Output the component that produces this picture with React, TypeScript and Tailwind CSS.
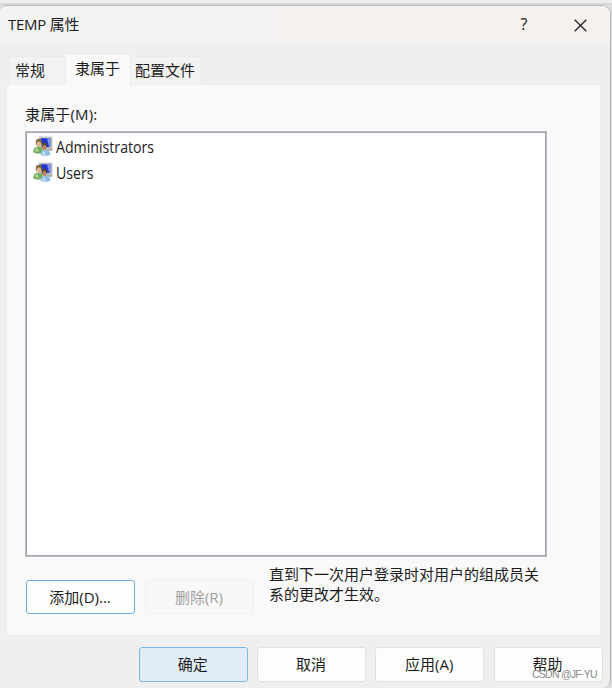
import React, { useState } from "react";

type DialogButtonProps = {
  label: string;
  className: string;
  disabled?: boolean;
};

const DialogButton: React.FC<DialogButtonProps> = ({ label, className, disabled }) => (
  <button
    disabled={disabled}
    className={`flex w-[109px] shrink-0 items-center justify-center rounded-[3px] border pr-px ${className}`}
  >
    {label}
  </button>
);

const GroupIcon = () => (
  <svg width="20" height="20" viewBox="0 0 20 20" className="shrink-0">
    <path d="M5.5.5h14v14.2H7z" fill="#c4c5c2" />
    <path d="M7.5 2.2h10v8.8H9z" fill="#2136cc" />
    <path d="M14 2.2h3.5v8.8h-1.3z" fill="#8297ec" />
    <path d="M14 12.2h4.8v2.5H14z" fill="#adafac" />
    <path d="M.3 16.3c0-4 2-5.6 5-5.6s4.5 1.6 4.5 5.6c-2 1.6-7.5 1.6-9.5 0z" fill="#6fad62" />
    <path d="M1.8 15.5c0-2 1-3.4 2.4-4l2 4z" fill="#aad493" />
    <ellipse cx="5.8" cy="6.4" rx="3.1" ry="3.6" fill="#86683f" />
    <ellipse cx="5.8" cy="8.2" rx="2.3" ry="2.7" fill="#dbb78a" />
    <path d="M7.5 18.8c0-3.4 1.8-4.6 5-4.6s5 1.2 5 4.6c-2.4 1.4-7.4 1.4-10 0z" fill="#8dbce2" />
    <path d="M9 18.4c0-2 .8-3 2.4-3.5l1.6 4z" fill="#c3e0f3" />
    <ellipse cx="11.4" cy="9.8" rx="2.5" ry="3.4" fill="#624838" />
    <ellipse cx="11.5" cy="11.7" rx="1.9" ry="2.6" fill="#bd8a66" />
  </svg>
);

const tabs = [
  { label: "常规", className: "h-[29px] w-[58px] pl-[6px] pt-[3px]" },
  { label: "隶属于", className: "h-[30px] w-[64px] pl-[8px] pt-[2px]" },
  { label: "配置文件", className: "h-[29px] w-[71px] pl-[4px] pt-[3px]" },
];

const groups = ["Administrators", "Users"];

const App: React.FC = () => {
  const [activeTab, setActiveTab] = useState("隶属于");

  return (
    <div className="relative h-[688px] w-[612px] overflow-hidden bg-[#dedede] font-['Open_Sans','Noto_Sans_CJK_SC',sans-serif] text-[15px] leading-5 text-[#1c1c1c]">
      <div className="h-[5px] border-b-2 border-[#d6d6d6] bg-[#eeeeee]" />
      <div className="flex h-[683px] w-[611px] flex-col overflow-hidden rounded-tl-[7px] rounded-tr-[9px] rounded-br-[8px] border-t border-r border-[#b5b5b5] bg-[#efefef]">
        <header className="flex h-[38px] shrink-0 items-center bg-linear-to-r from-[#f3f3f3] from-25% to-[#f5f1ee] to-60% pl-2">
          <h1 className="w-[504px] pb-0.5 tracking-[-0.25px]">TEMP 属性</h1>
          <button className="w-6 pb-0.5 text-center text-[16px] leading-5">?</button>
          <button className="ml-[38px] h-[13px]">
            <svg width="13" height="13" viewBox="0 0 13 13" fill="none" stroke="#29252a" strokeWidth="1.35">
              <path d="M.7.7l11.6 11.6M12.3.7L.7 12.3" />
            </svg>
          </button>
        </header>

        <nav className="flex h-[41px] shrink-0 items-end pl-2">
          {tabs.map((tab) => (
            <button
              key={tab.label}
              onClick={() => setActiveTab(tab.label)}
              className={`flex shrink-0 items-start whitespace-nowrap border-x border-t ${tab.className} ${
                activeTab === tab.label
                  ? "border-[#f9f9f9] bg-[#f9f9f9]"
                  : "border-[#ebebeb] bg-[#f2f2f2]"
              }`}
            >
              {tab.label}
            </button>
          ))}
        </nav>

        <main className="ml-[7px] h-[550px] w-[593px] shrink-0 bg-[#f9f9f9] pl-[18px] pt-[19px]">
          <p className="tracking-[0.15px]">隶属于(M):</p>
          <div className="mt-[7px] h-[426px] w-[522px] border border-[#b9bdc5] bg-white">
            <ul className="h-full border border-[#a0a4ad] pl-[6px]">
              {groups.map((group) => (
                <li key={group} className="flex h-[26px] items-center gap-[3px]">
                  <GroupIcon />
                  <span className="origin-left scale-x-[0.885] pt-px text-[16px] leading-5">{group}</span>
                </li>
              ))}
            </ul>
          </div>
          <div className="flex">
            <div className="flex gap-[10px] pl-px pt-[23px]">
              <DialogButton label="添加(D)..." className="h-[34px] border-[#6eafe4] bg-[#fdfdfd]" />
              <DialogButton label="删除(R)" className="h-[34px] border-[#f0f0f0] bg-[#f8f8f8] text-[#a0a0a0]" disabled />
            </div>
            <p className="ml-[15px] mt-[7px] w-[280px]">
              直到下一次用户登录时对用户的组成员关
              <br />
              系的更改才生效。
            </p>
          </div>
        </main>

        <footer className="flex gap-[9.3px] pl-[138.7px] pt-[12px]">
          <DialogButton label="确定" className="h-[35px] border-[#7bb8e5] bg-[#e0edf8] pb-px" />
          <DialogButton label="取消" className="h-[35px] border-[#e1e1e1] bg-[#fdfdfd] pb-px" />
          <DialogButton label="应用(A)" className="h-[35px] border-[#e1e1e1] bg-[#fdfdfd] pb-px" />
          <DialogButton label="帮助" className="h-[35px] border-[#e1e1e1] bg-[#fdfdfd] pb-px" />
        </footer>
      </div>
      <span className="absolute top-[668px] left-[532px] whitespace-nowrap font-['Liberation_Sans','Noto_Sans_CJK_SC',sans-serif] text-[10.5px] leading-3 tracking-[-0.75px] text-[#8c8c8c]">
        CSDN @JF·YU
      </span>
    </div>
  );
};

export default App;
